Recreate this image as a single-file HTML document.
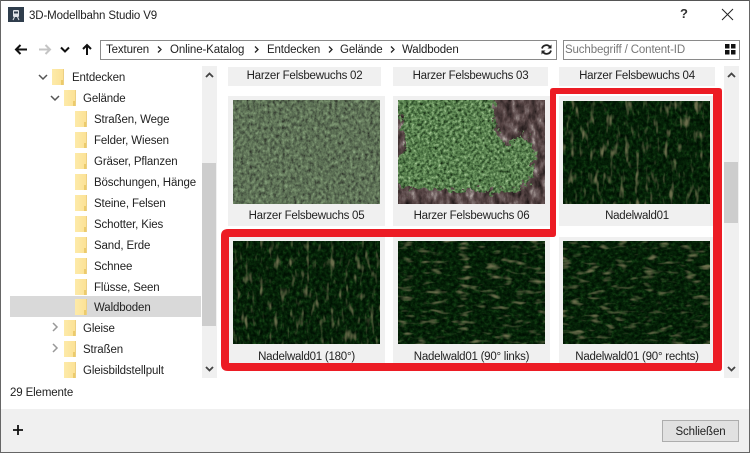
<!DOCTYPE html>
<html><head><meta charset="utf-8">
<style>
html,body{margin:0;padding:0;background:#fff}
#w{position:relative;width:750px;height:453px;overflow:hidden;background:#fff;font-family:"Liberation Sans",sans-serif;font-size:11.5px;letter-spacing:-0.13px;color:#222}
.a{position:absolute;white-space:nowrap}
.t{position:absolute;white-space:nowrap;line-height:16px;height:16px;margin-top:1px}
.f{position:absolute;width:12px;height:16px;background:linear-gradient(90deg,#fdeaa9,#fce296);border-right:1px solid #ecd084;box-sizing:border-box}
.f:after{content:"";position:absolute;right:0;bottom:0;width:2px;height:5px;background:#eccb6c}
.l{position:absolute;text-align:center;line-height:16px;color:#222;letter-spacing:-0.24px;margin-top:1px}
.b{position:absolute;background:#f0f0f0}
</style></head><body><div id="w">
<div class="a" style="left:0;top:0;width:750px;height:1px;background:#555"></div>
<div class="a" style="left:0;top:0;width:1px;height:453px;background:#666"></div>
<div class="a" style="right:0;top:0;width:1px;height:453px;background:#666"></div>

<div class="a" style="left:8px;top:7px;width:16px;height:15px;background:#2f3d4c"></div>
<svg class="a" style="left:8px;top:7px" width="16" height="15"><rect x="5" y="3" width="6" height="7" rx="1" fill="#dfe3e8"/><rect x="6" y="4.500" width="4" height="2" fill="#2f3d4c"/><path d="M5 13l1.500-3M11 13l-1.500-3" stroke="#dfe3e8" fill="none"/></svg>
<div class="t" style="left:29px;top:7px;font-size:11.5px">3D-Modellbahn Studio V9</div>
<div class="t" style="left:680px;top:5px;font-size:13px;font-weight:bold;color:#333">?</div>
<svg class="a" style="left:720px;top:7px" width="14" height="14"><path d="M2 2L13 13M13 2L2 13" stroke="#222" stroke-width="1" fill="none"/></svg>

<svg class="a" style="left:12px;top:40px" width="85" height="20" fill="none">
<path d="M4 9.500H15M8.500 5L4 9.500L8.500 14" stroke="#111" stroke-width="2"/>
<path d="M38 9.500H27M33.500 5L38 9.500L33.500 14" stroke="#c4c4c4" stroke-width="2"/>
<path d="M49 7.500L53 11.500L57 7.500" stroke="#111" stroke-width="2"/>
<path d="M75 15V5M71 9L75 5L79 9" stroke="#111" stroke-width="2"/>
</svg>
<div class="a" style="left:100px;top:40px;width:455px;height:18px;border:1px solid #8a8a8a"></div>
<div class="t" style="left:106px;top:41px">Texturen</div>
<div class="t" style="left:170px;top:41px">Online-Katalog</div>
<div class="t" style="left:267px;top:41px">Entdecken</div>
<div class="t" style="left:340px;top:41px">Gelände</div>
<div class="t" style="left:402px;top:41px">Waldboden</div>
<svg class="a" style="left:100px;top:40px" width="320" height="20" fill="none" stroke="#222" stroke-width="1.300"><path d="M58 6.500L61 9.500L58 12.500M155 6.500L158 9.500L155 12.500M229 6.500L232 9.500L229 12.500M291 6.500L294 9.500L291 12.500"/></svg>
<svg class="a" style="left:540px;top:43px" width="13" height="13" fill="none"><path d="M2 5.500A4.500 4.500 0 0 1 10 4M11 7.500A4.500 4.500 0 0 1 3 9" stroke="#222" stroke-width="1.800"/><path d="M11.500 1.500V5.500H7.500ZM1.500 11.500V7.500H5.500Z" fill="#222"/></svg>
<div class="a" style="left:563px;top:40px;width:175px;height:18px;border:1px solid #8a8a8a"></div>
<div class="t" style="left:565px;top:41px;color:#777">Suchbegriff / Content-ID</div>
<svg class="a" style="left:725px;top:44px" width="11" height="11" fill="#111"><rect width="4.500" height="4.500"/><rect x="6" width="4.500" height="4.500"/><rect y="6" width="4.500" height="4.500"/><rect x="6" y="6" width="4.500" height="4.500"/></svg>

<div class="a" style="left:10px;top:296px;width:191px;height:21px;background:#d9d9d9"></div>
<svg class="a" style="left:30px;top:66px" width="50" height="300" fill="none" stroke="#555" stroke-width="1.500">
<path d="M9 9L13 13L17 9"/><path d="M21 30L25 34L29 30"/>
<path d="M23 257L27 261L23 265" stroke="#999"/><path d="M23 278L27 282L23 286" stroke="#999"/>
</svg>
<div class="f" style="left:52px;top:69px"></div><div class="t" style="left:72px;top:69px">Entdecken</div>
<div class="f" style="left:64px;top:90px"></div><div class="t" style="left:83px;top:90px">Gelände</div>
<div class="f" style="left:75px;top:111px"></div><div class="t" style="left:94px;top:111px">Straßen, Wege</div>
<div class="f" style="left:75px;top:132px"></div><div class="t" style="left:94px;top:132px">Felder, Wiesen</div>
<div class="f" style="left:75px;top:153px"></div><div class="t" style="left:94px;top:153px">Gräser, Pflanzen</div>
<div class="f" style="left:75px;top:174px"></div><div class="t" style="left:94px;top:174px">Böschungen, Hänge</div>
<div class="f" style="left:75px;top:195px"></div><div class="t" style="left:94px;top:195px">Steine, Felsen</div>
<div class="f" style="left:75px;top:216px"></div><div class="t" style="left:94px;top:216px">Schotter, Kies</div>
<div class="f" style="left:75px;top:237px"></div><div class="t" style="left:94px;top:237px">Sand, Erde</div>
<div class="f" style="left:75px;top:258px"></div><div class="t" style="left:94px;top:258px">Schnee</div>
<div class="f" style="left:75px;top:279px"></div><div class="t" style="left:94px;top:279px">Flüsse, Seen</div>
<div class="f" style="left:75px;top:299px"></div><div class="t" style="left:94px;top:299px">Waldboden</div>
<div class="f" style="left:64px;top:320px"></div><div class="t" style="left:83px;top:320px">Gleise</div>
<div class="f" style="left:64px;top:341px"></div><div class="t" style="left:83px;top:341px">Straßen</div>
<div class="f" style="left:64px;top:362px"></div><div class="t" style="left:83px;top:362px">Gleisbildstellpult</div>

<div class="b" style="left:202px;top:66px;width:15px;height:312px"></div>
<div class="a" style="left:202px;top:163px;width:14px;height:163px;background:#cdcdcd"></div>
<div class="b" style="left:724px;top:66px;width:15px;height:312px"></div>
<div class="a" style="left:724px;top:162px;width:14px;height:61px;background:#cdcdcd"></div>
<svg class="a" style="left:202px;top:66px" width="537" height="312" fill="none" stroke="#444" stroke-width="1.800">
<path d="M4 11L7.500 7.500L11 11"/><path d="M4 301L7.500 304.500L11 301"/>
<path d="M526 11L529.500 7.500L533 11"/><path d="M526 301L529.500 304.500L533 301"/>
</svg>

<div class="b" style="left:228px;top:67px;width:153px;height:19px"></div>
<div class="b" style="left:393px;top:67px;width:155px;height:19px"></div>
<div class="b" style="left:559px;top:67px;width:156px;height:19px"></div>
<div class="b" style="left:228px;top:96px;width:157px;height:130px"></div>
<div class="b" style="left:393px;top:96px;width:157px;height:130px"></div>
<div class="b" style="left:559px;top:96px;width:156px;height:130px"></div>
<div class="b" style="left:228px;top:237px;width:157px;height:130px"></div>
<div class="b" style="left:393px;top:237px;width:157px;height:130px"></div>
<div class="b" style="left:559px;top:237px;width:156px;height:130px"></div>

<svg class="a" style="left:0;top:0" width="750" height="453" color-interpolation-filters="sRGB">
<defs>
<filter id="m5" x="0" y="0" width="1" height="1" color-interpolation-filters="sRGB">
<feTurbulence type="fractalNoise" baseFrequency="0.34 0.26" numOctaves="4" seed="5"/>
<feColorMatrix values="1 0 0 0 0 1 0 0 0 0 1 0 0 0 0 0 0 0 0 1"/>
<feComponentTransfer><feFuncR type="table" tableValues="0.1 0.2 0.3 0.37 0.44 0.52 0.68"/><feFuncG type="table" tableValues="0.1 0.22 0.36 0.45 0.53 0.63 0.78"/><feFuncB type="table" tableValues="0.1 0.18 0.28 0.34 0.4 0.48 0.64"/></feComponentTransfer>
</filter>
<filter id="m6" x="0" y="0" width="1" height="1" color-interpolation-filters="sRGB">
<feTurbulence type="fractalNoise" baseFrequency="0.34" numOctaves="4" seed="9"/>
<feColorMatrix values="1 0 0 0 0 1 0 0 0 0 1 0 0 0 0 0 0 0 0 1"/>
<feComponentTransfer><feFuncR type="table" tableValues="0.05 0.1 0.22 0.34 0.47 0.64 0.85"/><feFuncG type="table" tableValues="0.1 0.18 0.36 0.5 0.63 0.77 0.92"/><feFuncB type="table" tableValues="0.05 0.08 0.2 0.3 0.42 0.58 0.8"/></feComponentTransfer>
</filter>
<filter id="bk" x="0" y="0" width="1" height="1" color-interpolation-filters="sRGB">
<feTurbulence type="fractalNoise" baseFrequency="0.16 0.09" numOctaves="4" seed="3"/>
<feColorMatrix values="1 0 0 0 0 1 0 0 0 0 1 0 0 0 0 0 0 0 0 1"/>
<feComponentTransfer><feFuncR type="table" tableValues="0.05 0.13 0.24 0.34 0.46 0.7 0.95"/><feFuncG type="table" tableValues="0.04 0.1 0.19 0.27 0.4 0.66 0.95"/><feFuncB type="table" tableValues="0.05 0.1 0.19 0.27 0.4 0.64 0.95"/></feComponentTransfer>
</filter>
<filter id="dsp" x="-10%" y="-10%" width="120%" height="120%"><feTurbulence type="fractalNoise" baseFrequency="0.18" numOctaves="3" seed="4"/><feDisplacementMap in="SourceGraphic" scale="20" xChannelSelector="R" yChannelSelector="G"/></filter>
<mask id="mm" maskUnits="userSpaceOnUse" x="398" y="100" width="147" height="104"><g filter="url(#dsp)"><path fill="#fff" d="M404 92H492L496 130L506 146L522 134L534 150L534 178L512 192L460 190L430 190L392 186V160L406 150L402 120L392 112V92Z"/></g></mask>
<filter id="fv2" x="0" y="0" width="1" height="1" color-interpolation-filters="sRGB">
<feTurbulence type="fractalNoise" baseFrequency="0.3 0.26" numOctaves="3" seed="31" result="n"/>
<feColorMatrix in="n" values="1 0 0 0 0 1 0 0 0 0 1 0 0 0 0 0 0 0 0 1"/>
<feComponentTransfer result="b"><feFuncR type="table" tableValues="0 0 0.01 0.03 0.08 0.16"/><feFuncG type="table" tableValues="0.03 0.06 0.1 0.16 0.25 0.36"/><feFuncB type="table" tableValues="0 0.01 0.02 0.04 0.08 0.13"/></feComponentTransfer>
<feTurbulence type="fractalNoise" baseFrequency="0.2 0.07" numOctaves="2" seed="41"/>
<feColorMatrix result="x" values="0 0 0 0 0.42 0 0 0 0 0.43 0 0 0 0 0.3 3.8 0 0 0 -2.15"/>
<feMerge><feMergeNode in="b"/><feMergeNode in="x"/></feMerge>
</filter>
<filter id="fv3" x="0" y="0" width="1" height="1" color-interpolation-filters="sRGB">
<feTurbulence type="fractalNoise" baseFrequency="0.3 0.26" numOctaves="3" seed="12" result="n"/>
<feColorMatrix in="n" values="1 0 0 0 0 1 0 0 0 0 1 0 0 0 0 0 0 0 0 1"/>
<feComponentTransfer result="b"><feFuncR type="table" tableValues="0 0 0.01 0.03 0.08 0.16"/><feFuncG type="table" tableValues="0.03 0.06 0.1 0.16 0.25 0.36"/><feFuncB type="table" tableValues="0 0.01 0.02 0.04 0.08 0.13"/></feComponentTransfer>
<feTurbulence type="fractalNoise" baseFrequency="0.2 0.07" numOctaves="2" seed="17"/>
<feColorMatrix result="x" values="0 0 0 0 0.42 0 0 0 0 0.43 0 0 0 0 0.3 3.8 0 0 0 -2.15"/>
<feMerge><feMergeNode in="b"/><feMergeNode in="x"/></feMerge>
</filter>
<filter id="fh" x="0" y="0" width="1" height="1" color-interpolation-filters="sRGB">
<feTurbulence type="fractalNoise" baseFrequency="0.26 0.3" numOctaves="3" seed="51" result="n"/>
<feColorMatrix in="n" values="1 0 0 0 0 1 0 0 0 0 1 0 0 0 0 0 0 0 0 1"/>
<feComponentTransfer result="b"><feFuncR type="table" tableValues="0 0 0.01 0.03 0.08 0.16"/><feFuncG type="table" tableValues="0.03 0.06 0.1 0.16 0.25 0.36"/><feFuncB type="table" tableValues="0 0.01 0.02 0.04 0.08 0.13"/></feComponentTransfer>
<feTurbulence type="fractalNoise" baseFrequency="0.07 0.2" numOctaves="2" seed="61"/>
<feColorMatrix result="x" values="0 0 0 0 0.42 0 0 0 0 0.43 0 0 0 0 0.3 3.8 0 0 0 -2.15"/>
<feMerge><feMergeNode in="b"/><feMergeNode in="x"/></feMerge>
</filter>
<filter id="fh2" x="0" y="0" width="1" height="1" color-interpolation-filters="sRGB">
<feTurbulence type="fractalNoise" baseFrequency="0.26 0.3" numOctaves="3" seed="71" result="n"/>
<feColorMatrix in="n" values="1 0 0 0 0 1 0 0 0 0 1 0 0 0 0 0 0 0 0 1"/>
<feComponentTransfer result="b"><feFuncR type="table" tableValues="0 0 0.01 0.03 0.08 0.16"/><feFuncG type="table" tableValues="0.03 0.06 0.1 0.16 0.25 0.36"/><feFuncB type="table" tableValues="0 0.01 0.02 0.04 0.08 0.13"/></feComponentTransfer>
<feTurbulence type="fractalNoise" baseFrequency="0.07 0.2" numOctaves="2" seed="81"/>
<feColorMatrix result="x" values="0 0 0 0 0.42 0 0 0 0 0.43 0 0 0 0 0.3 3.8 0 0 0 -2.15"/>
<feMerge><feMergeNode in="b"/><feMergeNode in="x"/></feMerge>
</filter>
</defs>
<rect x="233" y="100" width="147" height="104" filter="url(#m5)"/>
<rect x="398" y="100" width="147" height="104" filter="url(#bk)"/>
<g mask="url(#mm)"><rect x="398" y="100" width="147" height="104" filter="url(#m6)"/></g>
<rect x="563" y="101" width="147" height="103" filter="url(#fv2)"/>
<rect x="233" y="241" width="147" height="103" filter="url(#fv3)"/>
<rect x="398" y="241" width="147" height="103" filter="url(#fh)"/>
<rect x="563" y="241" width="147" height="103" filter="url(#fh2)"/>
<path fill="#ec1c24" fill-rule="evenodd" d="M553 88H719Q722 88 722 91V368Q722 371 719 371H228Q221 371 221 364V236Q221 229 228 229H550V91Q550 88 553 88ZM556 94V234Q556 237 553 237H229V363H713V94Z"/>
</svg>

<div class="l" style="left:228px;top:67px;width:153px">Harzer Felsbewuchs 02</div>
<div class="l" style="left:393px;top:67px;width:155px">Harzer Felsbewuchs 03</div>
<div class="l" style="left:559px;top:67px;width:156px">Harzer Felsbewuchs 04</div>
<div class="l" style="left:228px;top:207px;width:157px">Harzer Felsbewuchs 05</div>
<div class="l" style="left:393px;top:207px;width:157px">Harzer Felsbewuchs 06</div>
<div class="l" style="left:559px;top:207px;width:156px">Nadelwald01</div>
<div class="l" style="left:228px;top:348px;width:157px">Nadelwald01 (180°)</div>
<div class="l" style="left:393px;top:348px;width:157px">Nadelwald01 (90° links)</div>
<div class="l" style="left:559px;top:348px;width:156px">Nadelwald01 (90° rechts)</div>

<div class="t" style="left:10px;top:384px">29 Elemente</div>
<div class="a" style="left:1px;top:409px;width:748px;height:43px;background:#f0f0f0"></div>
<div class="a" style="left:0;top:452px;width:750px;height:1px;background:#666"></div>
<svg class="a" style="left:12px;top:424px" width="12" height="12"><path d="M1 6H11M6 1V11" stroke="#111" stroke-width="1.800"/></svg>
<div class="a" style="left:662px;top:420px;width:75px;height:20px;background:#e1e1e1;border:1px solid #adadad;text-align:center;line-height:22px;color:#222">Schließen</div>
</div></body></html>
